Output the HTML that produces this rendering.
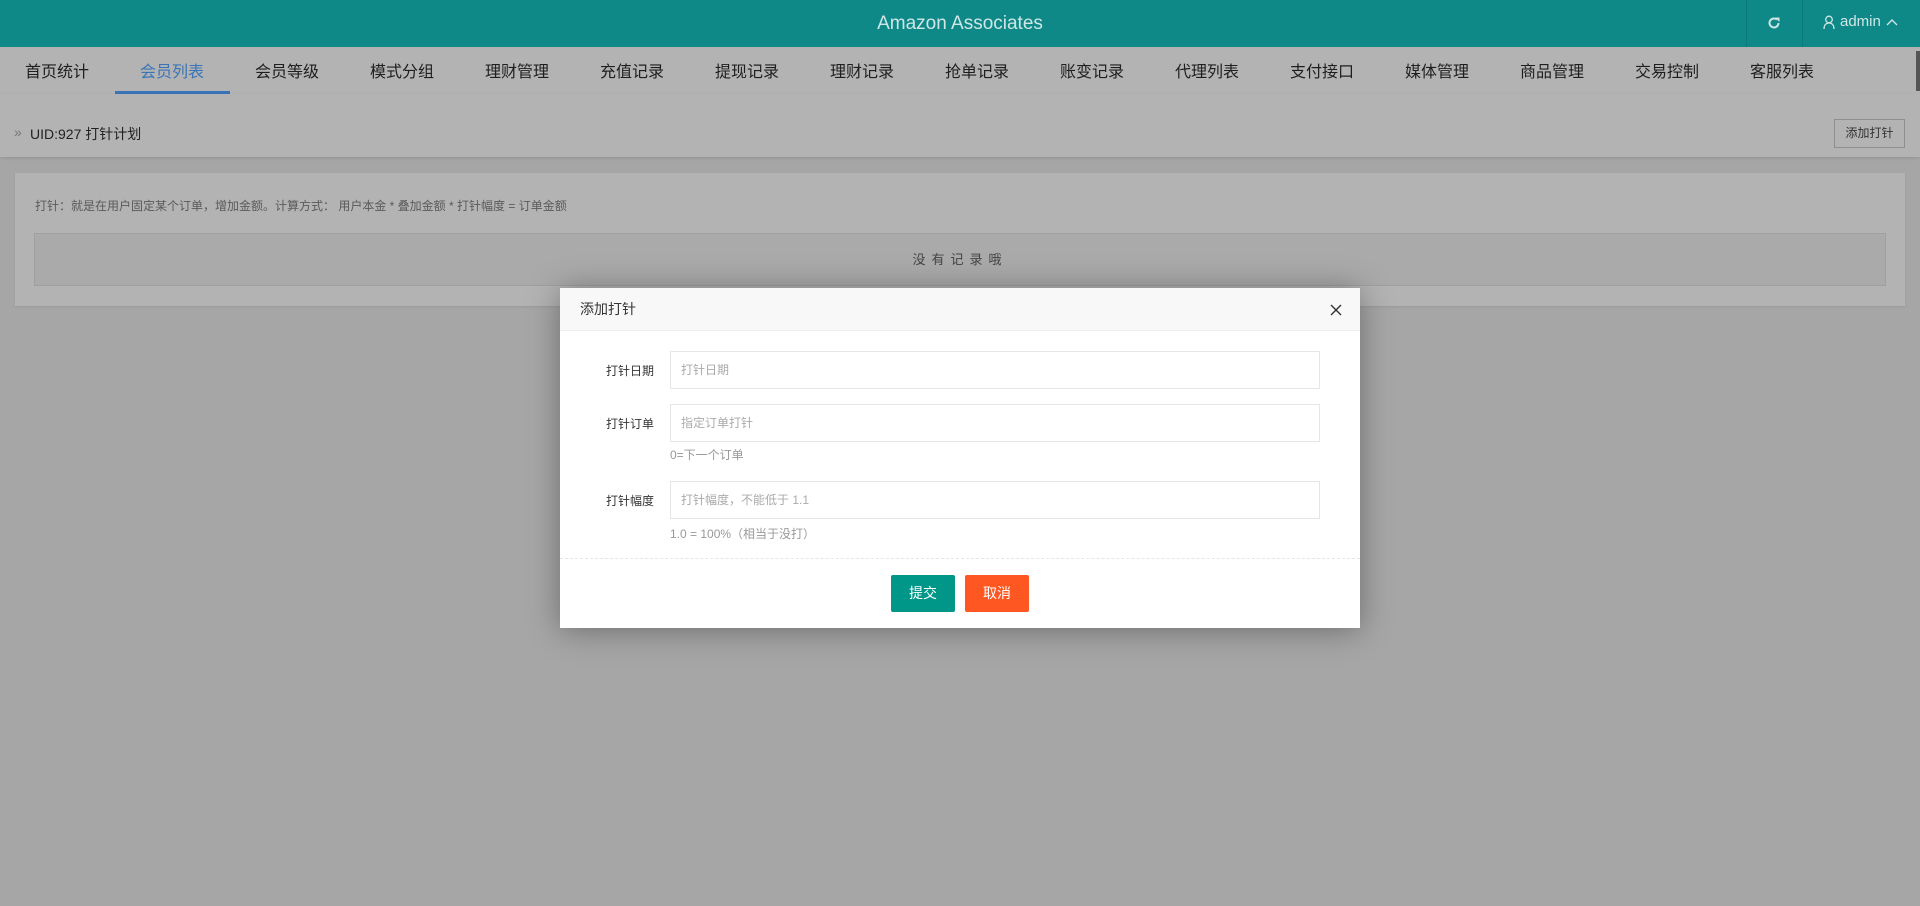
<!DOCTYPE html>
<html><head><meta charset="utf-8"><style>
*{margin:0;padding:0;box-sizing:border-box}
body{width:1920px;height:906px;overflow:hidden;background:#a6a6a6;font-family:"Liberation Sans","Noto Sans CJK SC",sans-serif;position:relative}
.hdr{position:absolute;left:0;top:0;width:1920px;height:47px;background:#0e8988}
.title{position:absolute;left:0;width:1920px;top:0;line-height:47px;text-align:center;color:#cfe6e5;font-size:19px}
.dv{position:absolute;top:0;width:1px;height:47px;background:#0b7a79}
.nav{position:absolute;left:0;top:47px;width:1920px;height:47px;background:#b3b3b3}
.nav span{position:absolute;top:0;line-height:52px;font-size:16px;color:#1e1e1e}
.ul{position:absolute;left:115px;top:44px;width:115px;height:3px;background:#3a74b8}
.bc{position:absolute;left:0;top:94px;width:1920px;height:63px;background:#b3b3b3;box-shadow:0 1px 3px rgba(0,0,0,.12)}
.card{position:absolute;left:15px;top:173px;width:1890px;height:133px;background:#b3b3b3;box-shadow:0 1px 2px rgba(0,0,0,.08)}
.modal{position:absolute;left:560px;top:288px;width:800px;height:340px;background:#fff;box-shadow:0 2px 30px rgba(0,0,0,.35)}
.mh{height:43px;background:#f8f8f8;border-bottom:1px solid #eee;line-height:43px;padding-left:20px;font-size:14px;color:#333}
.lab{position:absolute;right:706px;font-size:12px;color:#333}
.inp{position:absolute;left:110px;width:650px;height:38px;border:1px solid #e6e6e6;font-size:12px;color:#aaa;line-height:36px;padding-left:10px}
.hint{position:absolute;left:110px;font-size:12px;color:#999}
.btn{position:absolute;top:287px;width:64px;height:37px;line-height:37px;text-align:center;color:#fff;font-size:14px;border-radius:2px}
</style></head><body>
<div class="hdr">
<div class="title">Amazon Associates</div>
<div class="dv" style="left:1746px"></div><div class="dv" style="left:1802px"></div>
<svg style="position:absolute;left:1767px;top:16px" width="14" height="14" viewBox="0 0 14 14"><path d="M11.5 7A4.5 4.5 0 1 1 10 3.6" fill="none" stroke="#cfe6e5" stroke-width="2"/><path d="M8 1.5h4.5V6z" fill="#cfe6e5"/></svg>
<svg style="position:absolute;left:1823px;top:15px" width="12" height="15" viewBox="0 0 12 15"><circle cx="6" cy="4.5" r="3.3" fill="none" stroke="#cfe6e5" stroke-width="1.3"/><path d="M1 14c0-4 2-6 5-6s5 2 5 6" fill="none" stroke="#cfe6e5" stroke-width="1.3"/></svg>
<span style="position:absolute;left:1840px;top:0;line-height:44px;color:#cfe6e5;font-size:15px">admin</span>
<svg style="position:absolute;left:1886px;top:18px" width="12" height="8" viewBox="0 0 12 8"><path d="M1 7l5-5 5 5" fill="none" stroke="#cfe6e5" stroke-width="1.4"/></svg>
</div>
<div class="nav">
<span style="left:25px">首页统计</span><span style="left:140px;color:#3a74b8">会员列表</span><span style="left:255px">会员等级</span><span style="left:370px">模式分组</span><span style="left:485px">理财管理</span><span style="left:600px">充值记录</span><span style="left:715px">提现记录</span><span style="left:830px">理财记录</span><span style="left:945px">抢单记录</span><span style="left:1060px">账变记录</span><span style="left:1175px">代理列表</span><span style="left:1290px">支付接口</span><span style="left:1405px">媒体管理</span><span style="left:1520px">商品管理</span><span style="left:1635px">交易控制</span><span style="left:1750px">客服列表</span>
<div class="ul"></div>
<div style="position:absolute;left:1916px;top:4px;width:4px;height:40px;background:#555"></div>
</div>
<div class="bc">
<span style="position:absolute;left:14px;top:30px;font-size:14px;color:#777">»</span>
<span style="position:absolute;left:30px;top:30px;font-size:14px;color:#222">UID:927 打针计划</span>
<div style="position:absolute;left:1834px;top:25px;width:71px;height:29px;border:1px solid #8f8f8f;font-size:12px;line-height:27px;text-align:center;color:#333">添加打针</div>
</div>
<div class="card">
<div style="position:absolute;left:20px;top:24px;font-size:12px;color:#5a5a5a">打针：就是在用户固定某个订单，增加金额。计算方式： 用户本金 * 叠加金额 * 打针幅度 = 订单金额</div>
<div style="position:absolute;left:19px;top:60px;width:1852px;height:53px;background:#aaaaaa;border:1px solid #a0a0a0;line-height:51px;text-align:center;font-size:13px;color:#444;letter-spacing:6px">没有记录哦</div>
</div>
<div class="modal">
<div class="mh">添加打针</div>
<svg style="position:absolute;left:770px;top:16px" width="12" height="12" viewBox="0 0 12 12"><path d="M1 1l10 10M11 1L1 11" stroke="#333" stroke-width="1.4"/></svg>
<div class="lab" style="top:74px">打针日期</div><div class="inp" style="top:63px">打针日期</div>
<div class="lab" style="top:127px">打针订单</div><div class="inp" style="top:116px">指定订单打针</div>
<div class="hint" style="top:158px">0=下一个订单</div>
<div class="lab" style="top:204px">打针幅度</div><div class="inp" style="top:193px">打针幅度，不能低于 1.1</div>
<div class="hint" style="top:237px">1.0 = 100%（相当于没打）</div>
<div style="position:absolute;left:0;top:270px;width:800px;border-top:1px dashed #e6e6e6"></div>
<div class="btn" style="left:331px;background:#009688">提交</div>
<div class="btn" style="left:405px;background:#ff5722">取消</div>
</div>
</body></html>
